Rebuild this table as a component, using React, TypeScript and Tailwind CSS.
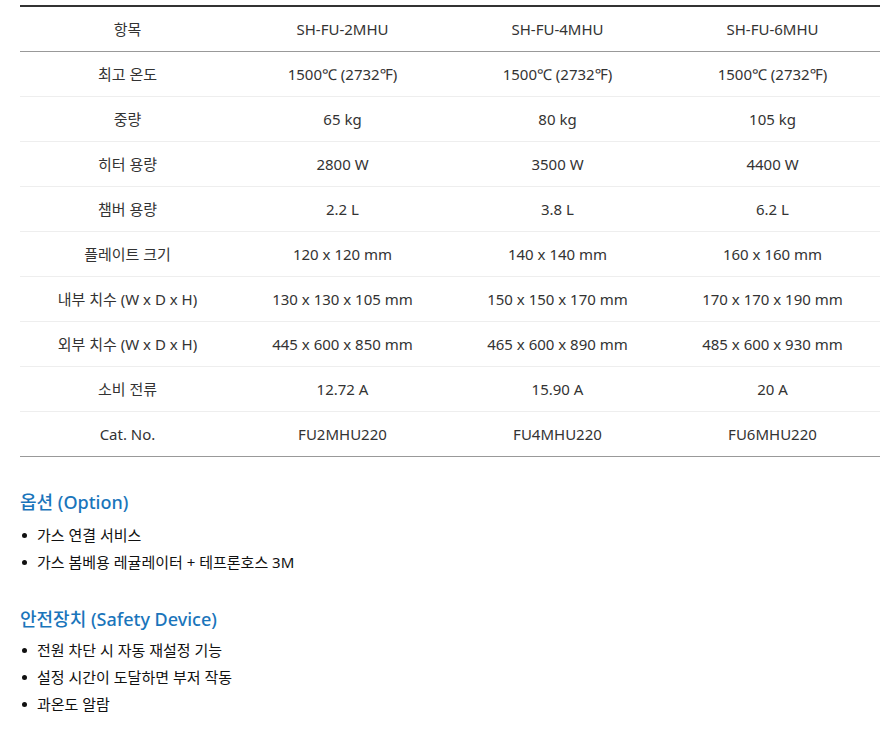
const HEAD = ['항목', 'SH-FU-2MHU', 'SH-FU-4MHU', 'SH-FU-6MHU']

const ROWS = [
  ['최고 온도', '1500℃ (2732℉)', '1500℃ (2732℉)', '1500℃ (2732℉)'],
  ['중량', '65 kg', '80 kg', '105 kg'],
  ['히터 용량', '2800 W', '3500 W', '4400 W'],
  ['챔버 용량', '2.2 L', '3.8 L', '6.2 L'],
  ['플레이트 크기', '120 x 120 mm', '140 x 140 mm', '160 x 160 mm'],
  ['내부 치수 (W x D x H)', '130 x 130 x 105 mm', '150 x 150 x 170 mm', '170 x 170 x 190 mm'],
  ['외부 치수 (W x D x H)', '445 x 600 x 850 mm', '465 x 600 x 890 mm', '485 x 600 x 930 mm'],
  ['소비 전류', '12.72 A', '15.90 A', '20 A'],
  ['Cat. No.', 'FU2MHU220', 'FU4MHU220', 'FU6MHU220'],
]

const OPTIONS = ['가스 연결 서비스', '가스 봄베용 레귤레이터 + 테프론호스 3M']
const SAFETY = ['전원 차단 시 자동 재설정 기능', '설정 시간이 도달하면 부저 작동', '과온도 알람']

function Bullets({ items }: { items: string[] }) {
  return (
    <ul>
      {items.map(t => (
        <li key={t} className="flex items-center h-[27px] text-[15px] text-[#111]">
          <span className="w-[5px] h-[5px] rounded-full bg-[#111] ml-[2px] mr-[10px]" />
          {t}
        </li>
      ))}
    </ul>
  )
}

export default function App() {
  return (
    <div
      className="bg-white min-h-[731px] pt-[5px] pl-[20px] pr-[9px]"
      style={{ fontFamily: '"Noto Sans", "Noto Sans CJK KR", sans-serif' }}
    >
      {/* Spec table */}
      <div className="border-t-2 border-[#333]">
        <div className="grid grid-cols-4 h-[45px] items-center border-b border-[#999] text-[15px] text-[#333] text-center">
          {HEAD.map(h => <div key={h}>{h}</div>)}
        </div>
        {ROWS.map((r, i) => (
          <div key={r[0]}
            className={`grid grid-cols-4 h-[45px] items-center border-b text-[15px] text-[#333] text-center ${
              i === ROWS.length - 1 ? 'border-[#999]' : 'border-[#eee]'
            }`}>
            {r.map((c, j) => <div key={j}>{c}</div>)}
          </div>
        ))}
      </div>

      {/* Option */}
      <h3 className="mt-[32px] h-[27px] leading-[27px] text-[18px] text-[#1a75bb] font-medium">옵션 (Option)</h3>
      <div className="mt-[6px]">
        <Bullets items={OPTIONS} />
      </div>

      {/* Safety */}
      <h3 className="mt-[30px] h-[27px] leading-[27px] text-[18px] text-[#1a75bb] font-medium">안전장치 (Safety Device)</h3>
      <div className="mt-[4px]">
        <Bullets items={SAFETY} />
      </div>
    </div>
  )
}
